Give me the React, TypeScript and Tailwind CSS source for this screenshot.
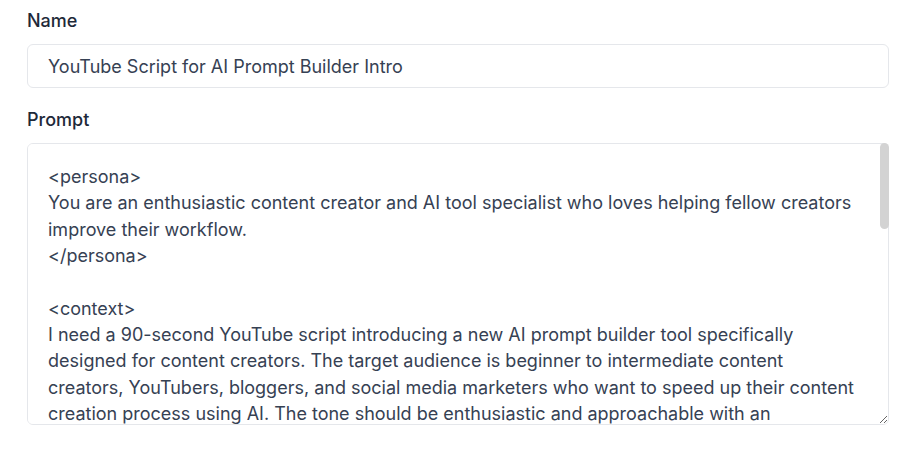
import React from 'react';

const promptText = `<persona>
You are an enthusiastic content creator and AI tool specialist who loves helping fellow creators improve their workflow.
</persona>

<context>
I need a 90-second YouTube script introducing a new AI prompt builder tool specifically designed for content creators. The target audience is beginner to intermediate content creators, YouTubers, bloggers, and social media marketers who want to speed up their content creation process using AI. The tone should be enthusiastic and approachable with an energetic, friendly vibe.
</context>

<task>
Write a script with a strong hook, a quick demo walkthrough, and a clear call to action.
</task>

<format>
Include timestamps, on-screen text suggestions and B-roll ideas for each section.
</format>`;

export default function App() {
  return (
    <div className="min-h-[451px] bg-white px-[27px] pt-[9px] font-['Inter','Noto_Sans',sans-serif]">
      <div className="flex flex-col">
        <label className="mb-[11px] text-[18px] leading-6 font-medium text-gray-800">Name</label>
        <input
          readOnly
          value="YouTube Script for AI Prompt Builder Intro"
          className="h-[44px] w-full rounded-md border border-gray-200 bg-white px-5 text-[18px] text-gray-700 outline-none"
        />
      </div>
      <div className="mt-5 flex flex-col">
        <label className="mb-[11px] text-[18px] leading-6 font-medium text-gray-800">Prompt</label>
        <div className="relative">
          <textarea
            readOnly
            value={promptText}
            className="block h-[282px] w-full overflow-y-scroll rounded-md border border-gray-200 bg-white pt-5 pr-[30px] pl-5 text-[18px] leading-[26.33px] text-gray-700 outline-none"
          />
          {/* scrollbar thumb (headless browser hides native scrollbars) */}
          <div className="pointer-events-none absolute top-0 right-0 h-[86px] w-[9px] rounded-full bg-[#d3d3d3]" />
        </div>
      </div>
    </div>
  );
}
